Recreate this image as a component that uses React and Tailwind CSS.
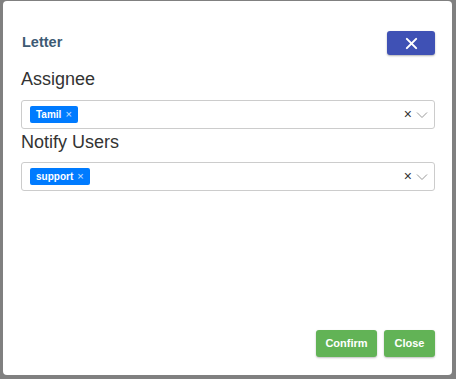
import React from 'react'

function Tag({ label }) {
  return (
    <span className="flex items-center h-[17px] px-[6px] bg-[#007bff] rounded-[2px] text-white text-[10px] font-bold leading-none">
      <span>{label}</span>
      <span className="ml-[4px] font-normal text-[11px] text-white/80">×</span>
    </span>
  )
}

function MultiSelect({ tags }) {
  return (
    <div className="flex items-center h-[29px] border border-[#cccccc] rounded-[3px] pl-[8px] pr-[6px]">
      <div className="flex-1 flex items-center gap-1">
        {tags.map((t) => (
          <Tag key={t} label={t} />
        ))}
      </div>
      <span className="text-[14px] text-[#333] leading-none mr-[4px] mb-[1px]">×</span>
      <svg width="12" height="8" viewBox="0 0 12 8" fill="none" stroke="#999" strokeWidth="1">
        <path d="M1 1.5l5 5 5-5" />
      </svg>
    </div>
  )
}

export default function App() {
  return (
    <div className="w-[456px] h-[379px] bg-[#808080] pl-[3px] pr-[4px] pt-[1px] pb-[4px] font-['Liberation_Sans',Arial,sans-serif]">
      <div className="h-full bg-white rounded-[4px] flex flex-col pl-[18px] pr-[17px] pt-[30px] pb-[18px]">
        {/* Header */}
        <div className="flex items-center justify-between">
          <h2 className="text-[14.5px] font-bold text-[#3d5a73] ml-[1px]">Letter</h2>
          <button className="w-[48px] h-[24px] bg-[#3f51b5] rounded-[3px] flex items-center justify-center shadow-[0_1px_2px_rgba(0,0,0,0.3)]">
            <svg width="13" height="13" viewBox="0 0 14 14" stroke="white" strokeWidth="2.2" strokeLinecap="round">
              <path d="M2 2l10 10M12 2L2 12" />
            </svg>
          </button>
        </div>

        <label className="mt-[13px] text-[18px] text-[#333] leading-[22px]">Assignee</label>
        <div className="mt-[10px]">
          <MultiSelect tags={['Tamil']} />
        </div>

        <label className="mt-[2px] text-[18px] text-[#333] leading-[22px]">Notify Users</label>
        <div className="mt-[9px]">
          <MultiSelect tags={['support']} />
        </div>

        <div className="flex-1" />

        {/* Footer */}
        <div className="flex justify-end gap-[7px]">
          <button className="w-[61px] h-[27px] bg-[#62b356] rounded-[3px] text-white text-[11px] font-bold shadow-[0_1px_2px_rgba(0,0,0,0.25)]">
            Confirm
          </button>
          <button className="w-[51px] h-[27px] bg-[#62b356] rounded-[3px] text-white text-[11px] font-bold shadow-[0_1px_2px_rgba(0,0,0,0.25)]">
            Close
          </button>
        </div>
      </div>
    </div>
  )
}
